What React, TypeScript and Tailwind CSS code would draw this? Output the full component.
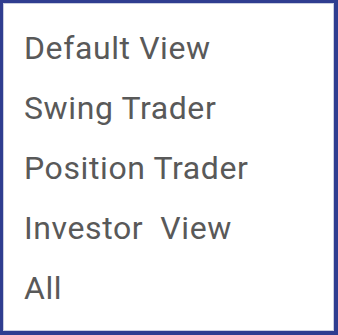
export default function App() {
  const items = ["Default View", "Swing Trader", "Position Trader", "Investor  View", "All"];
  return (
    <div className="w-[338px] h-[335px] bg-[#2f3d90] pt-[3px] pl-[3px] pr-[4px] pb-[4px]">
      <div className="w-full h-full bg-white border border-[#c9cde0] pl-[20px] pt-[14px] flex flex-col">
        {items.map((t) => (
          <div
            key={t}
            className="text-[32px] leading-[60px] text-[#595959] tracking-[0.6px] whitespace-pre"
            style={{ fontFamily: "Roboto, sans-serif" }}
          >
            {t}
          </div>
        ))}
      </div>
    </div>
  );
}
